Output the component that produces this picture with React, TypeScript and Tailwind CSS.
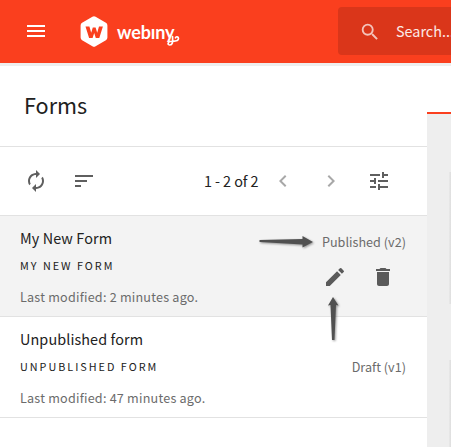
import type { ReactNode } from "react";
import {
  MdAutorenew,
  MdChevronLeft,
  MdChevronRight,
  MdDelete,
  MdEdit,
  MdMenu,
  MdSearch,
  MdSort,
  MdTune,
} from "react-icons/md";

type FormItem = {
  title: string;
  slug: string;
  modified: string;
  status: string;
  selected?: boolean;
};

const forms: FormItem[] = [
  {
    title: "My New Form",
    slug: "MY NEW FORM",
    modified: "Last modified: 2 minutes ago.",
    status: "Published (v2)",
    selected: true,
  },
  {
    title: "Unpublished form",
    slug: "UNPUBLISHED FORM",
    modified: "Last modified: 47 minutes ago.",
    status: "Draft (v1)",
  },
];

function Logo() {
  return (
    <div className="ml-[32px] flex items-center text-white">
      <svg width="28" height="31" viewBox="0 0 28 31">
        <path
          d="M12.4.8a3 3 0 0 1 3.2 0l10.3 6A3 3 0 0 1 27.4 9.400v12.200a3 3 0 0 1-1.500 2.600l-10.300 6a3 3 0 0 1-3.200 0l-10.300-6A3 3 0 0 1 .6 21.600V9.400a3 3 0 0 1 1.500-2.600z"
          fill="white"
        />
        <path
          d="M5.500 10.500H9.400L11.200 16.800 12.800 11.600H15.600L17.200 16.800 19 10.500H22.900L19.300 22H15.800L14.200 17 12.600 22H9.100Z"
          fill="#fa3f1e"
        />
      </svg>
      <div className="relative ml-[9px] h-[31px] w-[64px]">
        <span className="block font-['Lato',sans-serif] text-[18px] leading-[33px] font-bold tracking-[-0.100px]">
          webıny
        </span>
        <svg className="absolute top-[14px] left-[47px]" width="18" height="16" viewBox="0 0 18 16">
          <path
            d="M8.500 6.500C9 12.500 8.500 15 5.800 15 3.500 15 3.500 12 6 11.500 9 11 14.500 12 14.500 8.500 14.500 6.500 12 6.200 11.500 7.800"
            fill="none"
            stroke="white"
            strokeWidth="1.700"
            strokeLinecap="round"
          />
        </svg>
      </div>
    </div>
  );
}

function TopBar() {
  return (
    <header className="flex h-[63px] w-full shrink-0 items-start bg-[#fa3f1e]">
      <div className="flex h-[62px] items-center pl-[24px] text-white">
        <MdMenu size={24} />
        <Logo />
      </div>
      <div className="mt-[7px] ml-auto flex h-[48px] w-[113px] shrink-0 items-center rounded-l bg-[#da361a] pl-[21px]">
        <MdSearch size={22} className="mt-px shrink-0 text-white/70" />
        <span className="ml-[15px] text-[14.400px] leading-[20px] whitespace-nowrap text-white/90">
          Search...
        </span>
      </div>
    </header>
  );
}

function Toolbar() {
  return (
    <div className="flex h-[69px] items-center border-b border-[#e2e2e2] pl-[24px] text-[#5f5f5f]">
      <MdAutorenew size={24} />
      <MdSort size={24} className="ml-[24px]" />
      <span className="ml-[108px] w-[55px] text-[14.400px] leading-[20px] tracking-[-0.080px] whitespace-nowrap text-[#212121]">
        1 - 2 of 2
      </span>
      <MdChevronLeft size={24} className="ml-[12px] text-[#a8a8a8]" />
      <MdChevronRight size={24} className="ml-[24px] text-[#a8a8a8]" />
      <MdTune size={24} className="ml-[24px]" />
    </div>
  );
}

function Row({ item, children }: { item: FormItem; children?: ReactNode }) {
  return (
    <li
      className={`flex h-[101px] justify-between border-b border-[#e2e2e2] pr-[21px] pl-[20px] ${
        item.selected ? "bg-[#f3f3f3]" : "bg-white"
      }`}
    >
      <div className="flex flex-col pt-[10px] whitespace-nowrap">
        <span className="text-[14.400px] leading-[24px] tracking-[0.100px] text-[#212121]">
          {item.title}
        </span>
        <span className="mt-[5px] text-[10.800px] leading-[20px] tracking-[2px] text-[#212121]">
          {item.slug}
        </span>
        <span className="mt-[12px] text-[12.600px] leading-[20px] tracking-[0.220px] text-[#6b6b6b]">
          {item.modified}
        </span>
      </div>
      <div
        className={`flex flex-col items-end ${item.selected ? "pt-[16px]" : "pt-[40px]"}`}
      >
        <span className="text-[12.600px] leading-[20px] tracking-[0.030px] whitespace-nowrap text-[#6b6b6b]">
          {item.status}
        </span>
        {children}
      </div>
    </li>
  );
}

/* Hand-placed pointers that lie over the list. */
function Pointers() {
  return (
    <svg
      className="pointer-events-none absolute top-0 left-0"
      width="451"
      height="447"
      viewBox="0 0 451 447"
      style={{ filter: "drop-shadow(1px 1.5px 1px rgba(0,0,0,.4))" }}
    >
      <path d="M259.500 240 302.500 239V236L313 242 302.500 247.500V244.500L259.500 242Z" fill="#505050" />
      <path d="M333 297 338.500 305.500 336 305 334.500 340H332L330.500 305 328 305.500Z" fill="#505050" />
    </svg>
  );
}

export default function App() {
  return (
    <div className="relative flex h-[447px] w-[451px] flex-col overflow-hidden bg-white font-['Noto_Sans_CJK_SC',sans-serif]">
      <TopBar />
      <div className="h-[3px] shrink-0 bg-[#eeeeee]" />
      <div className="flex min-h-0 flex-1">
        <main className="w-[427px] shrink-0 bg-white">
          <div className="flex h-[81px] items-center border-b border-[#e2e2e2] pb-[2px] pl-[24px]">
            <h1 className="text-[21.600px] leading-[32px] text-[#212121]">Forms</h1>
          </div>
          <Toolbar />
          <ul>
            {forms.map((item) => (
              <Row key={item.title} item={item}>
                {item.selected && (
                  <div className="mt-[13px] flex gap-[24px] pr-[11px] text-[#5a5a5a]">
                    <MdEdit size={24} />
                    <MdDelete size={24} />
                  </div>
                )}
              </Row>
            ))}
          </ul>
        </main>
        <aside className="flex flex-1 flex-col">
          <div className="h-[46px]" />
          <div className="flex flex-1 flex-col items-end border-t-2 border-[#fa3f1e] bg-[#eeeeee] pt-[58px]">
            <div className="h-[132px] w-[2px] bg-linear-to-r from-[#e9e9e9] to-[#dedede]" />
            <div className="mt-[56px] w-[2px] flex-1 bg-linear-to-r from-[#e9e9e9] to-[#dedede]" />
          </div>
        </aside>
      </div>
      <Pointers />
    </div>
  );
}
